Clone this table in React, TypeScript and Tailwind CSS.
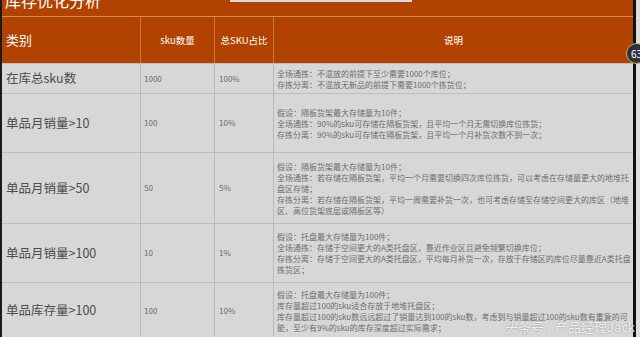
const font = { fontFamily: '"Noto Sans CJK SC", "Noto Sans", sans-serif' };

type Row = {
  name: string;
  count: string;
  pct: string;
  lines: string[];
  h: string;
};

const rows: Row[] = [
  {
    name: "在库总sku数",
    count: "1000",
    pct: "100%",
    h: "h-[30px]",
    lines: [
      "全场通拣：不混放的前提下至少需要1000个库位；",
      "存拣分离：不混放无新品的前提下需要1000个拣货位；",
    ],
  },
  {
    name: "单品月销量>10",
    count: "100",
    pct: "10%",
    h: "h-[59px]",
    lines: [
      "假设：隔板货架最大存储量为10件；",
      "全场通拣：90%的sku可存储在隔板货架，且平均一个月无需切换库位拣货；",
      "存拣分离：90%的sku可存储在隔板货架，且平均一个月补货次数不到一次；",
    ],
  },
  {
    name: "单品月销量>50",
    count: "50",
    pct: "5%",
    h: "h-[71px]",
    lines: [
      "假设：隔板货架最大存储量为10件；",
      "全场通拣：若存储在隔板货架，平均一个月需要切换四次库位拣货，可以考虑在存储量更大的地堆托",
      "盘区存储；",
      "存拣分离：若存储在隔板货架，平均一周需要补货一次，也可考虑存储至存储空间更大的库区（地堆",
      "区、高位货架底层或隔板区等）",
    ],
  },
  {
    name: "单品月销量>100",
    count: "10",
    pct: "1%",
    h: "h-[59px]",
    lines: [
      "假设：托盘最大存储量为100件；",
      "全场通拣：存储于空间更大的A类托盘区，靠近作业区且避免频繁切换库位；",
      "存拣分离：存储于空间更大的A类托盘区，平均每月补货一次，存放于存储区的库位尽量靠近A类托盘",
      "拣货区；",
    ],
  },
  {
    name: "单品库存量>100",
    count: "100",
    pct: "10%",
    h: "h-[56px]",
    lines: [
      "假设：托盘最大存储量为100件；",
      "库存量超过100的sku适合存放于地堆托盘区；",
      "库存量超过100的sku数远远超过了销量达到100的sku数，考虑到与销量超过100的sku数有重复的可",
      "能，至少有9%的sku的库存深度超过实际需求；",
    ],
  },
];

export default function App() {
  return (
    <div className="relative w-[640px] h-[337px] overflow-hidden bg-[#dcdcdc]" style={font}>
      <div className="flex h-full">
        <div className="w-[2px] bg-[#1a1a1a]" />
        <div className="w-[631px] flex flex-col">
          {/* title bar */}
          <div className="relative h-[16px] shrink-0 bg-[#b24200] overflow-hidden">
            <div className="absolute left-[228px] top-0 w-[182px] h-[2px] bg-[#d9d9e6]" />
            <div className="pl-[3px] -mt-[8px] text-[16px] leading-none text-white">库存优化分析</div>
          </div>
          {/* header */}
          <div className="flex h-[47px] shrink-0 bg-[#b24200] border-t border-[#d88a5c] text-white">
            <div className="w-[138px] flex items-center pl-[4px] text-[13px]">类别</div>
            <div className="w-[74px] flex items-center justify-center border-l border-[#c9784a] text-[9.5px]">sku数量</div>
            <div className="w-[59px] flex items-center justify-center border-l border-[#c9784a] text-[9.5px]">总SKU占比</div>
            <div className="flex-1 flex items-center justify-center border-l border-[#c9784a] text-[9.5px]">说明</div>
          </div>
          {/* body */}
          {rows.map((r) => (
            <div key={r.name} className={`flex ${r.h} shrink-0 bg-[#d7d7d7] border-t border-[#bdbdbd]`}>
              <div className="w-[138px] flex items-center pl-[4px] text-[12.5px] text-[#4d4d4d]">{r.name}</div>
              <div className="w-[74px] flex items-center pl-[3px] border-l border-[#bababa] text-[8px] text-[#6a6a6a]">{r.count}</div>
              <div className="w-[59px] flex items-center pl-[4px] border-l border-[#bababa] text-[8px] text-[#6a6a6a]">{r.pct}</div>
              <div className="flex-1 flex flex-col justify-center pl-[3px] border-l border-[#bababa] text-[8px] leading-[11px] text-[#6e6e6e]">
                {r.lines.map((l, i) => (
                  <div key={i} className="whitespace-nowrap">{l}</div>
                ))}
              </div>
            </div>
          ))}
        </div>
        <div className="w-[3px] bg-[#111]" />
        <div className="flex-1 bg-[#dedede]" />
      </div>

      {/* notification badge */}
      <div className="absolute left-[626px] top-[43px] w-[21px] h-[21px] rounded-full bg-[#2c313b] border-[1.5px] border-[#c9c24a] flex items-center pl-[4px] text-[10px] text-white">
        63
      </div>

      {/* watermark */}
      <div
        className="absolute left-[505px] top-[317px] text-[13px] text-white/80 whitespace-nowrap"
        style={{ textShadow: "0 0 2px rgba(0,0,0,0.35)" }}
      >
        头条号 / 产品经理Jack
      </div>
    </div>
  );
}
